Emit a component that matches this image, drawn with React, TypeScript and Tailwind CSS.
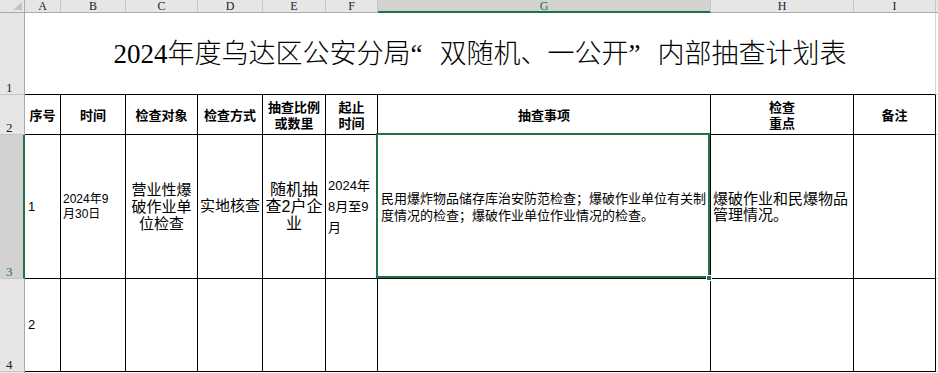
const cols = ["A", "B", "C", "D", "E", "F", "G", "H", "I"];

const cell = "border-r border-b border-black";

export default function App() {
  return (
    <div className="w-[938px] h-[373px] overflow-hidden bg-white text-black grid grid-cols-[25px_36px_65px_72px_65px_63px_52px_333px_143px_82px_1fr] grid-rows-[13px_82px_40px_144px_93px_1fr] font-['Liberation_Sans','Noto_Sans_CJK_SC',sans-serif]">
      {/* column headers */}
      <div className="relative bg-[#e6e6e6] border-r border-b border-[#ababab]">
        <svg className="absolute left-0 top-0" width="24" height="12" viewBox="0 0 24 12">
          <polygon points="22,2 22,10 13,10" fill="#c2c2c2" />
        </svg>
      </div>
      {cols.map((c) => (
        <div
          key={c}
          className={`flex justify-center text-[12px] leading-[12px] font-['Liberation_Serif',serif] border-r border-r-[#c6c6c6] ${
            c === "G"
              ? "bg-[#d2d2d2] border-b-2 border-b-[#217346] text-[#217346]"
              : "bg-[#e6e6e6] border-b border-b-[#ababab] text-[#222]"
          }`}
        >
          {c}
        </div>
      ))}
      <div className="bg-[#e6e6e6] border-b border-[#ababab]" />

      {/* row 1: title */}
      <RowHead n="1" />
      <div className="col-span-9 flex items-center justify-center border-b border-black border-r border-r-[#d4d4d4] text-[27px] font-light font-['Liberation_Serif','Noto_Sans_CJK_SC',serif] whitespace-nowrap">
        <span className="pt-[1px]">
          2024年度乌达区公安分局<span className="inline-block w-[29px] text-left">“</span>双随机、一公开
          <span className="inline-block w-[29px] text-left">”</span>内部抽查计划表
        </span>
      </div>
      <div className="border-b border-[#d4d4d4]" />

      {/* row 2: headers */}
      <RowHead n="2" />
      {[
        ["序号"],
        ["时间"],
        ["检查对象"],
        ["检查方式"],
        ["抽查比例", "或数里"],
        ["起止", "时间"],
        ["抽查事项"],
        ["检查", "重点"],
        ["备注"],
      ].map((lines, i) => (
        <div
          key={i}
          className={`${cell} flex flex-col items-center justify-center text-[13px] leading-[16px] font-bold font-['Noto_Sans_CJK_SC',sans-serif] whitespace-nowrap`}
        >
          {lines.map((l) => (
            <span key={l}>{l}</span>
          ))}
        </div>
      ))}
      <div className="border-b border-[#d4d4d4]" />

      {/* row 3 */}
      <RowHead n="3" active />
      <div className={`${cell} flex items-center pl-[3px] text-[13px]`}>1</div>
      <div className={`${cell} flex items-center pl-[2px] text-[12px] leading-[15px] whitespace-nowrap`}>
        <span>
          2024年9
          <br />
          月30日
        </span>
      </div>
      <div className={`${cell} flex items-center justify-center text-center text-[15px] leading-[17px] whitespace-nowrap`}>
        <span>
          营业性爆
          <br />
          破作业单
          <br />
          位检查
        </span>
      </div>
      <div className={`${cell} flex items-center justify-center text-[15px] whitespace-nowrap`}>实地核查</div>
      <div className={`${cell} flex items-center justify-center text-center text-[16px] leading-[17px] whitespace-nowrap`}>
        <span>
          随机抽
          <br />
          查2户企
          <br />
          业
        </span>
      </div>
      <div className={`${cell} flex items-center pl-[2px] text-[13px] leading-[21px] whitespace-nowrap`}>
        <span>
          2024年
          <br />
          8月至9
          <br />
          月
        </span>
      </div>
      <div className={`${cell} relative flex items-center pl-[3px] text-[13px] leading-[17px] whitespace-nowrap`}>
        <span>
          民用爆炸物品储存库治安防范检查；爆破作业单位有关制
          <br />
          度情况的检查；爆破作业单位作业情况的检查。
        </span>
        <div className="absolute -left-[2px] -top-[2px] right-0 bottom-0 border-2 border-[#217346] pointer-events-none" />
        <div className="absolute -right-[2px] -bottom-[3px] w-[6px] h-[6px] bg-[#217346] border border-white" />
      </div>
      <div className={`${cell} flex items-center pl-[2px] text-[15px] leading-[16px] whitespace-nowrap`}>
        <span>
          爆破作业和民爆物品
          <br />
          管理情况。
        </span>
      </div>
      <div className={cell} />
      <div className="border-b border-[#d4d4d4]" />

      {/* row 4 */}
      <RowHead n="4" />
      <div className={`${cell} flex items-center pl-[3px] text-[13px]`}>2</div>
      {[0, 1, 2, 3, 4, 5, 6, 7].map((i) => (
        <div key={i} className={cell} />
      ))}
      <div className="border-b border-[#d4d4d4]" />

      {/* row 5 (partly visible) */}
      <div className="bg-[#e6e6e6] border-r border-[#ababab]" />
    </div>
  );
}

function RowHead({ n, active }: { n: string; active?: boolean }) {
  return (
    <div
      className={`flex items-end pl-[6px] text-[13px] leading-[13px] font-['Liberation_Serif',serif] border-b border-b-[#c6c6c6] ${
        active
          ? "bg-[#d2d2d2] border-r-2 border-r-[#217346] text-[#217346]"
          : "bg-[#e6e6e6] border-r border-r-[#ababab] text-[#222]"
      }`}
    >
      {n}
    </div>
  );
}
